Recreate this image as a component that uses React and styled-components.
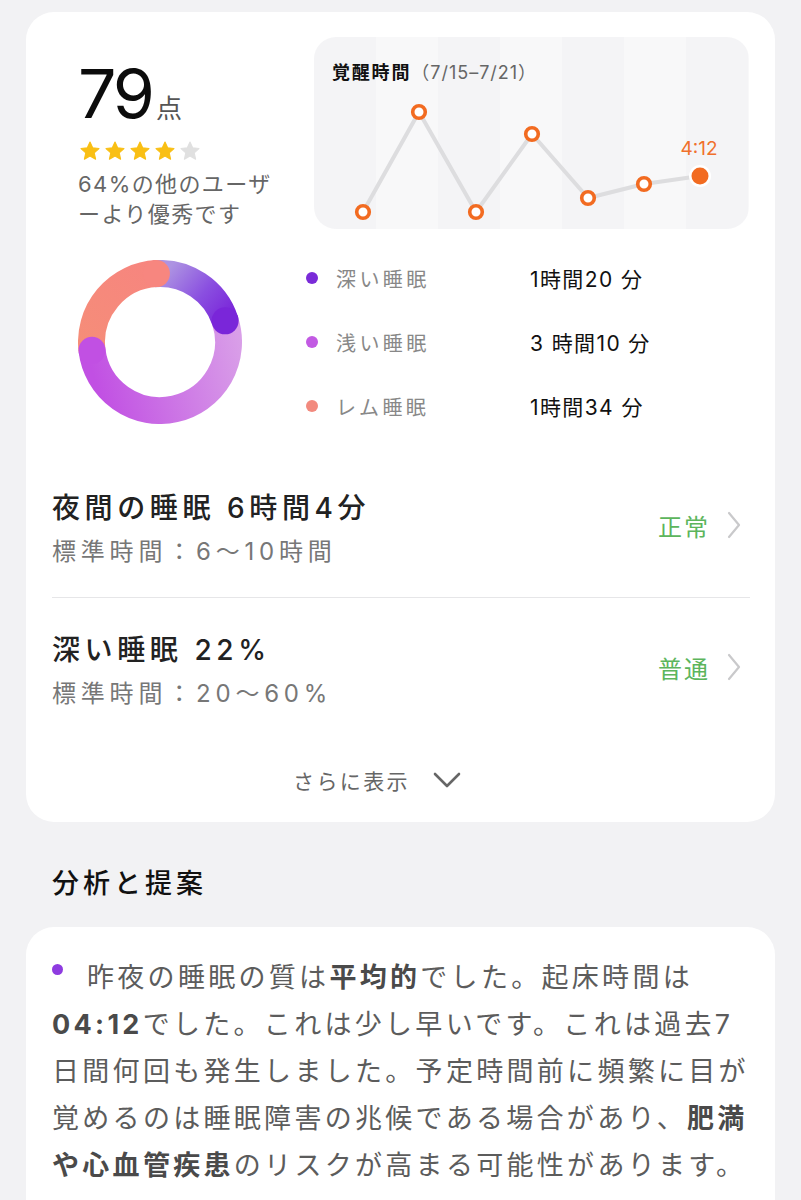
import React from "react";
import styled, { createGlobalStyle } from "styled-components";

const Global = createGlobalStyle`
  html, body { margin: 0; padding: 0; background: #f2f2f4; }
  body { font-family: "Inter", "Noto Sans CJK JP", sans-serif; color: #111; -webkit-font-smoothing: antialiased; }
  * { box-sizing: border-box; }
`;

const Page = styled.div`
  width: 801px;
  padding: 12px 26px 0 26px;
  display: flex;
  flex-direction: column;
`;

const Card = styled.div`
  background: #fff;
  border-radius: 28px;
  padding: ${(p) => p.$pad};
`;

const TopSection = styled.div`
  display: flex;
  height: 192px;
`;

const ScoreCol = styled.div`
  width: 262px;
  padding: 22px 0 0 26px;
  display: flex;
  flex-direction: column;
`;

const ScoreLine = styled.div`
  display: flex;
  align-items: baseline;
  height: 68px;
`;

const ScoreNum = styled.span`
  font-family: "Inter", sans-serif;
  font-size: 68px;
  line-height: 68px;
  font-weight: 400;
  letter-spacing: -3px;
  color: #0c0c0c;
`;

const ScoreUnit = styled.span`
  font-family: "Noto Sans CJK JP", sans-serif;
  font-size: 26px;
  color: #555;
  margin-left: 4px;
`;

const Stars = styled.div`
  display: flex;
  gap: 3px;
  margin-top: 13px;
  margin-left: 1px;
`;

const Better = styled.div`
  margin-top: 7px;
  font-size: 22px;
  line-height: 30px;
  color: #666;
  letter-spacing: 1.4px;
`;

const ChartCard = styled.div`
  width: 435px;
  height: 192px;
  border-radius: 22px;
  padding-top: 24px;
  background: repeating-linear-gradient(
    to right,
    #f4f4f6 0px,
    #f4f4f6 62px,
    #f8f8f9 62px,
    #f8f8f9 124px
  );
  display: flex;
  flex-direction: column;
`;

const ChartTitle = styled.div`
  padding-left: 18px;
  height: 24px;
  line-height: 24px;
  display: flex;
  align-items: baseline;
`;

const ChartTitleMain = styled.span`
  font-size: 18px;
  font-weight: 700;
  letter-spacing: 1.8px;
  color: #111;
`;

const ChartTitleSub = styled.span`
  font-size: 18px;
  color: #666;
  letter-spacing: 1px;
`;

const DonutSection = styled.div`
  display: flex;
  align-items: center;
  margin-top: 29px;
`;

const DonutWrap = styled.div`
  width: 262px;
  padding-left: 26px;
  display: flex;
`;

const Legend = styled.div`
  display: flex;
  flex-direction: column;
  gap: 24px;
  margin-left: -8px;
`;

const LegendRow = styled.div`
  display: grid;
  grid-template-columns: 12px 176px auto;
  column-gap: 18px;
  align-items: center;
  height: 40px;
`;

const Dot = styled.span`
  width: 12px;
  height: 12px;
  border-radius: 50%;
  background: ${(p) => p.$color};
  display: inline-block;
`;

const LegendLabel = styled.span`
  font-size: 20px;
  color: #888;
  letter-spacing: 3.4px;
`;

const LegendValue = styled.span`
  font-size: 21px;
  color: #111;
  letter-spacing: 1.4px;
`;

const Rows = styled.div`
  margin-top: 30px;
  display: flex;
  flex-direction: column;
`;

const Row = styled.div`
  display: flex;
  align-items: center;
  padding: 34px 0 29px 0;
  border-bottom: ${(p) => (p.$divider ? "1px solid #e6e6e8" : "none")};
  margin-right: -1px;
`;

const RowText = styled.div`
  flex: 1;
  display: flex;
  flex-direction: column;
  gap: 10px;
`;

const RowTitle = styled.div`
  font-size: 28px;
  line-height: 36px;
  font-weight: 500;
  color: #222;
  letter-spacing: 4.6px;
`;

const RowSub = styled.div`
  font-size: 24px;
  line-height: 32px;
  color: #777;
  letter-spacing: 4.8px;
`;

const Status = styled.div`
  display: flex;
  align-items: center;
  gap: 16px;
  padding-right: 8px;
  margin-top: -8px;
`;

const StatusText = styled.span`
  font-size: 24px;
  color: #5cb55c;
  letter-spacing: 2px;
`;

const More = styled.div`
  display: flex;
  justify-content: center;
  align-items: center;
  gap: 22px;
  margin-top: 26px;
  height: 30px;
  padding-right: 46px;
`;

const MoreText = styled.span`
  font-size: 21px;
  color: #666;
  letter-spacing: 2.4px;
`;

const SectionTitle = styled.h2`
  margin: 42px 0 23px 26px;
  font-size: 27px;
  line-height: 40px;
  font-weight: 500;
  color: #111;
  letter-spacing: 4px;
`;

const Para = styled.p`
  margin: 0;
  font-size: 27px;
  line-height: 47px;
  color: #5c5c5c;
  letter-spacing: 3.3px;
  white-space: nowrap;
`;

const Bold = styled.b`
  font-weight: 700;
  color: #4a4a4a;
`;

const BulletDot = styled.span`
  display: inline-block;
  width: 11px;
  height: 11px;
  border-radius: 50%;
  background: #8e3be0;
  vertical-align: 12px;
  margin: 0 24px 0 0;
`;

function Star({ on }) {
  const c = on ? "#f9bf14" : "#e0e0e0";
  return (
    <svg width="22" height="22" viewBox="0 0 24 24">
      <polygon
        points="12,2.2 14.9,8.5 21.8,9.3 16.6,14 18.1,20.9 12,17.4 5.9,20.9 7.4,14 2.2,9.3 9.1,8.5"
        fill={c}
        stroke={c}
        strokeWidth="1.2"
        strokeLinejoin="round"
      />
    </svg>
  );
}

function WakeChart() {
  const pts = [
    [49, 127],
    [105, 27],
    [162, 127],
    [218, 49],
    [274, 113],
    [330, 99],
    [386, 91],
  ];
  return (
    <svg width="435" height="144" viewBox="0 0 435 144">
      <polyline
        points={pts.map((p) => p.join(",")).join(" ")}
        fill="none"
        stroke="#dddddf"
        strokeWidth="4"
        strokeLinejoin="round"
      />
      {pts.slice(0, 6).map(([x, y], i) => (
        <circle key={i} cx={x} cy={y} r="6.3" fill="#fff" stroke="#f26b21" strokeWidth="3.6" />
      ))}
      <circle cx={386} cy={91} r="11" fill="#fff" />
      <circle cx={386} cy={91} r="8.5" fill="#f26b21" />
      <text
        x={385}
        y={63}
        textAnchor="middle"
        dominantBaseline="central"
        fontFamily="Inter, sans-serif"
        fontSize="19"
        fill="#f0702c"
      >
        4:12
      </text>
    </svg>
  );
}

const polar = (cx, cy, r, deg) => {
  const a = (deg * Math.PI) / 180;
  return [cx + r * Math.sin(a), cy - r * Math.cos(a)];
};

const arc = (cx, cy, r, a0, a1) => {
  const [x0, y0] = polar(cx, cy, r, a0);
  const [x1, y1] = polar(cx, cy, r, a1);
  const large = a1 - a0 > 180 ? 1 : 0;
  return `M ${x0} ${y0} A ${r} ${r} 0 ${large} 1 ${x1} ${y1}`;
};

function Donut() {
  const c = 82;
  const r = 68.5;
  const w = 27;
  const deepEnd = polar(c, c, r, 72);
  const lightEnd = polar(c, c, r, 263);
  const remEnd = polar(c, c, r, 357);
  return (
    <svg width="164" height="164" viewBox="0 0 164 164">
      <defs>
        <linearGradient
          id="gDeep"
          gradientUnits="userSpaceOnUse"
          x1="88"
          y1="12"
          x2={deepEnd[0]}
          y2={deepEnd[1]}
        >
          <stop offset="0" stopColor="#ad93e2" />
          <stop offset="0.55" stopColor="#8a4fe0" />
          <stop offset="1" stopColor="#7a26d9" />
        </linearGradient>
        <linearGradient id="gLight" gradientUnits="userSpaceOnUse" x1="160" y1="70" x2="14" y2="110">
          <stop offset="0" stopColor="#d99fe8" />
          <stop offset="1" stopColor="#c150e3" />
        </linearGradient>
        <linearGradient id="gRem" gradientUnits="userSpaceOnUse" x1="10" y1="100" x2="82" y2="10">
          <stop offset="0" stopColor="#f58e78" />
          <stop offset="1" stopColor="#f7857f" />
        </linearGradient>
      </defs>
      <path d={arc(c, c, r, -5, 72)} fill="none" stroke="url(#gDeep)" strokeWidth={w} />
      <path d={arc(c, c, r, 72, 263)} fill="none" stroke="url(#gLight)" strokeWidth={w} />
      <path d={arc(c, c, r, 263, 357)} fill="none" stroke="url(#gRem)" strokeWidth={w} />
      <circle cx={deepEnd[0]} cy={deepEnd[1]} r={w / 2} fill="#7a26d9" />
      <circle cx={lightEnd[0]} cy={lightEnd[1]} r={w / 2} fill="#c150e3" />
      <circle cx={remEnd[0]} cy={remEnd[1]} r={w / 2} fill="#f7867f" />
    </svg>
  );
}

const Chevron = () => (
  <svg width="16" height="28" viewBox="0 0 16 28">
    <polyline points="3,2 13,14 3,26" fill="none" stroke="#c9c9cb" strokeWidth="2.2" strokeLinecap="round" strokeLinejoin="round" />
  </svg>
);

const ChevronDown = () => (
  <svg width="30" height="18" viewBox="0 0 30 18">
    <polyline points="3,3 15,15 27,3" fill="none" stroke="#666" strokeWidth="2.6" strokeLinecap="round" strokeLinejoin="round" />
  </svg>
);

const legend = [
  { color: "#7a2bd8", label: "深い睡眠", value: "1時間20 分" },
  { color: "#c25ae3", label: "浅い睡眠", value: "3 時間10 分" },
  { color: "#f28a7e", label: "レム睡眠", value: "1時間34 分" },
];

const rows = [
  { title: "夜間の睡眠 6時間4分", sub: "標準時間：6〜10時間", status: "正常" },
  { title: "深い睡眠 22%", sub: "標準時間：20〜60%", status: "普通" },
];

export default function App() {
  return (
    <>
      <Global />
      <Page>
        <Card $pad="25px 26px 27px 26px">
          <TopSection>
            <ScoreCol>
              <ScoreLine>
                <ScoreNum>79</ScoreNum>
                <ScoreUnit>点</ScoreUnit>
              </ScoreLine>
              <Stars>
                {[1, 1, 1, 1, 0].map((on, i) => (
                  <Star key={i} on={on} />
                ))}
              </Stars>
              <Better>
                64%の他のユーザ
                <br />
                ーより優秀です
              </Better>
            </ScoreCol>
            <ChartCard>
              <ChartTitle>
                <ChartTitleMain>覚醒時間</ChartTitleMain>
                <ChartTitleSub>（7/15–7/21）</ChartTitleSub>
              </ChartTitle>
              <WakeChart />
            </ChartCard>
          </TopSection>

          <DonutSection>
            <DonutWrap>
              <Donut />
            </DonutWrap>
            <Legend>
              {legend.map((l) => (
                <LegendRow key={l.label}>
                  <Dot $color={l.color} />
                  <LegendLabel>{l.label}</LegendLabel>
                  <LegendValue>{l.value}</LegendValue>
                </LegendRow>
              ))}
            </Legend>
          </DonutSection>

          <Rows>
            {rows.map((r, i) => (
              <Row key={r.title} $divider={i === 0}>
                <RowText>
                  <RowTitle>{r.title}</RowTitle>
                  <RowSub>{r.sub}</RowSub>
                </RowText>
                <Status>
                  <StatusText>{r.status}</StatusText>
                  <Chevron />
                </Status>
              </Row>
            ))}
          </Rows>

          <More>
            <MoreText>さらに表示</MoreText>
            <ChevronDown />
          </More>
        </Card>

        <SectionTitle>分析と提案</SectionTitle>

        <Card $pad="27px 26px 40px 26px">
          <Para>
            <BulletDot />
            昨夜の睡眠の質は<Bold>平均的</Bold>でした。起床時間は
            <br />
            <Bold>04:12</Bold>でした。これは少し早いです。これは過去7
            <br />
            日間何回も発生しました。予定時間前に頻繁に目が
            <br />
            覚めるのは睡眠障害の兆候である場合があり、<Bold>肥満</Bold>
            <br />
            <Bold>や心血管疾患</Bold>のリスクが高まる可能性があります。
          </Para>
        </Card>
      </Page>
    </>
  );
}
